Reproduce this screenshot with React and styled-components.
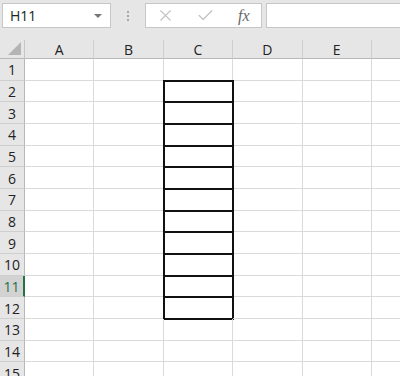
import { Fragment } from 'react'
import styled, { createGlobalStyle } from 'styled-components'
import { X, Check } from 'lucide-react'

const GlobalStyle = createGlobalStyle`
  html, body {
    margin: 0;
    padding: 0;
    background: #ffffff;
    font-family: "Open Sans", "Noto Sans", sans-serif;
    overflow: hidden;
  }
`

const COLS = ['A', 'B', 'C', 'D', 'E', '']
const ROWS = Array.from({ length: 15 }, (_, i) => i + 1)
const ROW_H = 65 / 3

const Sheet = styled.div`
  width: 400px;
  height: 376px;
  display: flex;
  flex-direction: column;
  background: #e6e6e6;
  overflow: hidden;
`

const Toolbar = styled.div`
  height: 40px;
  flex-shrink: 0;
  display: flex;
  align-items: flex-start;
  padding: 3px 0 0 2px;
  box-sizing: border-box;
  background: #e6e6e6;
`

const NameBox = styled.div`
  width: 109px;
  height: 25px;
  box-sizing: border-box;
  background: #fff;
  border: 1px solid #c6c6c6;
  display: flex;
  align-items: center;
  justify-content: space-between;
  padding: 0 8px 0 7px;
  font-size: 14px;
  color: #222;
`

const Caret = styled.span`
  width: 0;
  height: 0;
  border-left: 4px solid transparent;
  border-right: 4px solid transparent;
  border-top: 4px solid #777;
`

const Dots = styled.div`
  width: 34px;
  height: 25px;
  display: flex;
  flex-direction: column;
  align-items: center;
  justify-content: center;
  gap: 2px;
  span {
    width: 2px;
    height: 2px;
    background: #a6a6a6;
  }
`

const FxButtons = styled.div`
  width: 117px;
  height: 25px;
  box-sizing: border-box;
  background: #fff;
  border: 1px solid #c6c6c6;
  display: flex;
  align-items: center;
  padding-left: 10px;
  gap: 21px;
  color: #c2c2c2;
`

const FxLabel = styled.span`
  font-family: "Liberation Serif", serif;
  font-style: italic;
  font-size: 16px;
  color: #666;
  margin-left: 2px;
`

const FormulaInput = styled.div`
  flex: 1;
  height: 25px;
  margin-left: 4px;
  box-sizing: border-box;
  background: #fff;
  border: 1px solid #c6c6c6;
  border-right: none;
`

const Grid = styled.div`
  flex-shrink: 0;
  display: grid;
  grid-template-columns: 25px repeat(6, 69.4px);
  grid-template-rows: 19px repeat(15, ${ROW_H}px);
  background: #fff;
`

const Corner = styled.div`
  background: #e6e6e6;
  border-right: 1px solid #c6c6c6;
  border-bottom: 1px solid #b8b8b8;
  position: relative;
  &::after {
    content: '';
    position: absolute;
    right: 3px;
    bottom: 3px;
    border-left: 13px solid transparent;
    border-bottom: 13px solid #b4b4b4;
  }
`

const ColHead = styled.div`
  background: #e6e6e6;
  border-right: 1px solid #cfcfcf;
  border-bottom: 1px solid #b8b8b8;
  display: flex;
  align-items: center;
  justify-content: center;
  font-size: 14px;
  color: #222;
`

const RowHead = styled.div`
  background: ${(p) => (p.$active ? '#d2d2d2' : '#e6e6e6')};
  color: ${(p) => (p.$active ? '#217346' : '#222')};
  border-right: ${(p) => (p.$active ? '2px solid #217346' : '1px solid #b8b8b8')};
  border-bottom: 1px solid #cfcfcf;
  display: flex;
  align-items: center;
  justify-content: center;
  font-size: 14px;
  padding-top: 1px;
  box-sizing: border-box;
`

const Cell = styled.div`
  border-right: 1px solid #dadada;
  border-bottom: 1px solid #dadada;
  outline: ${(p) => (p.$boxed ? '2px solid #111' : 'none')};
  outline-offset: -1px;
`

export default function App() {
  return (
    <>
      <GlobalStyle />
      <Sheet>
        <Toolbar>
          <NameBox>
            H11
            <Caret />
          </NameBox>
          <Dots>
            <span />
            <span />
            <span />
          </Dots>
          <FxButtons>
            <X size={19} strokeWidth={1.4} />
            <Check size={19} strokeWidth={1.6} />
            <FxLabel>fx</FxLabel>
          </FxButtons>
          <FormulaInput />
        </Toolbar>
        <Grid>
          <Corner />
          {COLS.map((c, i) => (
            <ColHead key={`h${i}`}>{c}</ColHead>
          ))}
          {ROWS.map((r) => (
            <Fragment key={`r${r}`}>
              <RowHead $active={r === 11}>{r}</RowHead>
              {COLS.map((c, i) => (
                <Cell key={`${r}-${i}`} $boxed={c === 'C' && r >= 2 && r <= 12} />
              ))}
            </Fragment>
          ))}
        </Grid>
      </Sheet>
    </>
  )
}
